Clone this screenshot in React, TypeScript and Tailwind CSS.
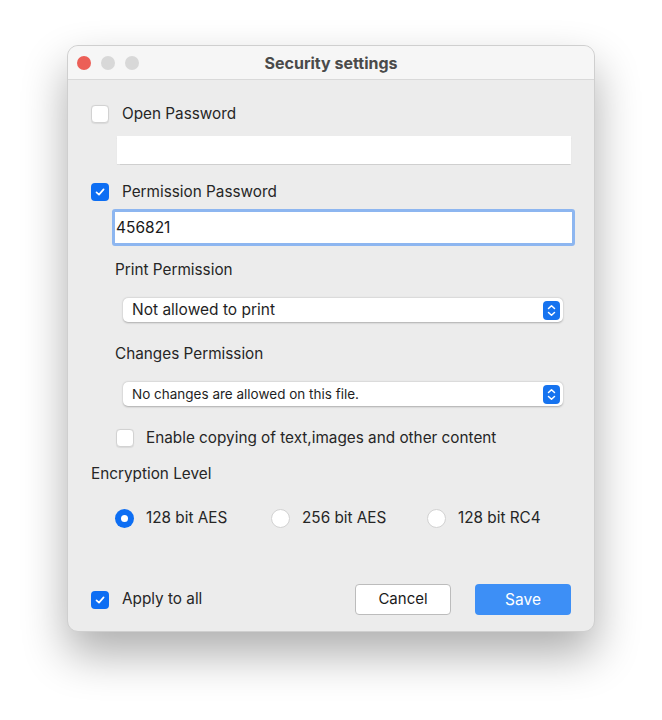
import React from 'react';

const font = { fontFamily: 'Inter, "Noto Sans", sans-serif' };

const Check = ({ checked }: { checked: boolean }) =>
    checked ? (
        <span className="flex h-[18px] w-[18px] shrink-0 items-center justify-center rounded-[4px] bg-[#0d6ef3]">
            <svg width="12" height="12" viewBox="0 0 12 12" fill="none">
                <path d="M2.5 6.3 L5 8.6 L9.6 3.4" stroke="white" strokeWidth="1.7" strokeLinecap="round" strokeLinejoin="round" />
            </svg>
        </span>
    ) : (
        <span className="h-[18px] w-[18px] shrink-0 rounded-[4px] border border-[#d2d2d2] bg-white shadow-[0_0.5px_1px_rgba(0,0,0,0.08)]" />
    );

const Radio = ({ selected, label }: { selected: boolean; label: string }) => (
    <div className="flex w-[156px] items-center gap-[12px]">
        {selected ? (
            <span className="flex h-[19px] w-[19px] items-center justify-center rounded-full bg-[#0d6ef3]">
                <span className="h-[7px] w-[7px] rounded-full bg-white" />
            </span>
        ) : (
            <span className="h-[19px] w-[19px] rounded-full border border-[#d2d2d2] bg-white" />
        )}
        <span className="text-[15.3px] text-[#262626]">{label}</span>
    </div>
);

const Select = ({ value, small }: { value: string; small?: boolean }) => (
    <div className="ml-[55px] mr-[31px] flex h-[24px] items-center justify-between rounded-[5px] bg-white pl-[9px] pr-[3px] shadow-[0_0.5px_2px_rgba(0,0,0,0.28)]">
        <span className={small ? 'text-[13.5px] text-[#1f1f1f]' : 'text-[15.5px] text-[#1f1f1f]'}>{value}</span>
        <span className="flex h-[19px] w-[17px] items-center justify-center rounded-[4px] bg-[#1673ef]">
            <svg width="9" height="13" viewBox="0 0 9 13" fill="none">
                <path d="M1.5 4.5 L4.5 1.7 L7.5 4.5" stroke="white" strokeWidth="1.5" strokeLinecap="round" strokeLinejoin="round" />
                <path d="M1.5 8.5 L4.5 11.3 L7.5 8.5" stroke="white" strokeWidth="1.5" strokeLinecap="round" strokeLinejoin="round" />
            </svg>
        </span>
    </div>
);

export default function App() {
    return (
        <div className="h-[720px] w-[662px] bg-white pl-[67px] pt-[45px]" style={font}>
            <div className="w-[528px] overflow-hidden rounded-[11px] border border-[#cfcfcf] bg-[#ececec] shadow-[0_22px_45px_rgba(0,0,0,0.32)]">
                {/* Title bar */}
                <div className="relative flex h-[34px] items-center border-b border-[#d9d9d9] bg-[#f6f6f6] pl-[9px]">
                    <div className="flex gap-[10px]">
                        <span className="h-[14px] w-[14px] rounded-full bg-[#ec5f57]" />
                        <span className="h-[14px] w-[14px] rounded-full bg-[#d8d8d8]" />
                        <span className="h-[14px] w-[14px] rounded-full bg-[#d8d8d8]" />
                    </div>
                    <span className="absolute inset-x-0 text-center text-[16px] font-bold text-[#4a4a4a]">
                        Security settings
                    </span>
                </div>

                <div className="flex flex-col pb-[16px]">
                    {/* Open password */}
                    <div className="ml-[23px] mt-[25px] flex h-[18px] items-center gap-[13px]">
                        <Check checked={false} />
                        <span className="text-[15.3px] text-[#262626]">Open Password</span>
                    </div>
                    <div className="ml-[49px] mr-[23px] mt-[13px] h-[28px] bg-white shadow-[0_0.5px_1px_rgba(0,0,0,0.12)]" />

                    {/* Permission password */}
                    <div className="ml-[23px] mt-[19px] flex h-[18px] items-center gap-[13px]">
                        <Check checked />
                        <span className="text-[15.3px] text-[#262626]">Permission Password</span>
                    </div>
                    <div className="ml-[44px] mr-[19px] mt-[8px] flex h-[37px] items-center rounded-[3px] border-[3px] border-[#8db6f0] bg-white pl-[1px]">
                        <span className="text-[15.5px] text-[#1a1a1a]">456821</span>
                    </div>

                    <div className="ml-[47px] mt-[15px] flex h-[18px] items-center text-[15.3px] text-[#262626]">
                        Print Permission
                    </div>
                    <div className="mt-[19px]">
                        <Select value="Not allowed to print" />
                    </div>

                    <div className="ml-[47px] mt-[23px] flex h-[18px] items-center text-[15.3px] text-[#262626]">
                        Changes Permission
                    </div>
                    <div className="mt-[19px]">
                        <Select value="No changes are allowed on this file." small />
                    </div>

                    <div className="ml-[48px] mt-[23px] flex h-[18px] items-center gap-[12px]">
                        <Check checked={false} />
                        <span className="text-[15.3px] text-[#262626]">Enable copying of text,images and other content</span>
                    </div>

                    <div className="ml-[23px] mt-[18px] flex h-[18px] items-center text-[15.3px] text-[#262626]">
                        Encryption Level
                    </div>
                    <div className="ml-[47px] mt-[26px] flex h-[19px] items-center">
                        <Radio selected label="128 bit AES" />
                        <Radio selected={false} label="256 bit AES" />
                        <Radio selected={false} label="128 bit RC4" />
                    </div>

                    {/* Footer */}
                    <div className="ml-[23px] mr-[23px] mt-[56px] flex h-[31px] items-center">
                        <div className="flex items-center gap-[13px]">
                            <Check checked />
                            <span className="text-[15.3px] text-[#262626]">Apply to all</span>
                        </div>
                        <div className="ml-auto flex gap-[24px]">
                            <button className="h-[31px] w-[96px] rounded-[4px] border border-[#bcbcbc] bg-white text-[15px] text-[#1a1a1a]">
                                Cancel
                            </button>
                            <button className="h-[31px] w-[96px] rounded-[4px] bg-[#3d8ff6] text-[15.5px] text-white">
                                Save
                            </button>
                        </div>
                    </div>
                </div>
            </div>
        </div>
    );
}
